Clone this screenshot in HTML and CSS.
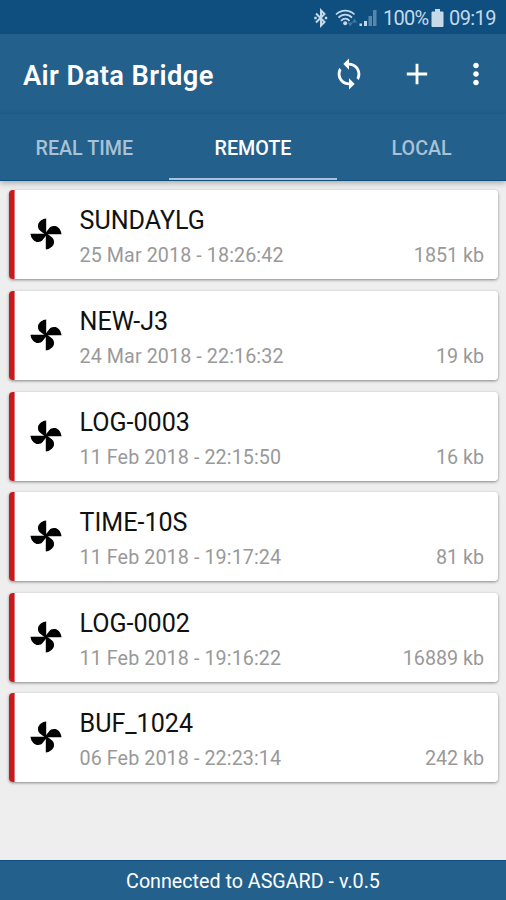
FILE: index.html
```html
<!DOCTYPE html>
<html lang="en">
<head>
<meta charset="utf-8">
<title>Air Data Bridge</title>
<link rel="stylesheet" href="styles.css">
</head>
<body>
<svg width="0" height="0" class="defs">
  <symbol id="fan" viewBox="-16 -16 32 32">
    <g id="blades">
      <path id="blade" d="M.2-15.500V1L-1 .6L-5.800-3.200C-7.800-4.500-8.300-7-7.900-9.500C-6.800-12.800-3.500-15.200.2-15.500Z"/>
      <use href="#blade" transform="rotate(90)"/>
      <use href="#blade" transform="rotate(180)"/>
      <use href="#blade" transform="rotate(270)"/>
    </g>
  </symbol>
</svg>
<div class="app">
  <div class="status">
    <svg class="bt" width="14" height="20" viewBox="0 0 14 20"><path d="M2 5.500l8.500 8.500L7 17.500v-15l3.500 3.500L2 14.500" fill="none" stroke="currentColor" stroke-width="2"/><path d="M.3 8.800h2.400v2.400H.3zM10.800 8.800h2.400v2.400h-2.400z" fill="currentColor"/></svg>
    <svg class="wifi" width="23" height="18" viewBox="0 0 23 18"><g fill="none" stroke="currentColor" stroke-width="1.700"><path d="M1 5.500C6.500.2 14 .2 19.500 5.500M3.500 8.700C7.500 4.600 13 4.600 17 8.700M6 11.800C8.700 9 11.800 9 14.500 11.800"/></g><circle cx="10.200" cy="14.200" r="2" fill="currentColor"/><g fill="#4179a5"><path d="M12.800 13.500h5l-2.500 4zM17 13.500l2.500-4 2.500 4z"/></g></svg>
    <svg class="signal" width="18" height="18" viewBox="0 0 18 18"><g fill="currentColor"><path d="M.5 14.500h2.500V17H.5zM5 12h3v5H5z"/><g opacity=".4"><path d="M9.500 7h3.500v10h-3.500zM14 1h3.500v16h-3.500z"/></g></g></svg>
    <span class="percent">100%</span>
    <svg class="battery" width="13" height="18" viewBox="0 0 13 18"><path d="M4 0h5v2.500h2.500q1 0 1 1V17q0 1-1 1h-10q-1 0-1-1V3.500q0-1 1-1H4z" fill="currentColor"/></svg>
    <span class="clock">09:19</span>
  </div>
  <header class="bar">
    <h1>Air Data Bridge</h1>
    <svg class="sync" width="34" height="34" viewBox="0 0 24 24"><path fill="#fff" d="M12 4V1L8 5l4 4V6c3.310 0 6 2.690 6 6 0 1.010-.25 1.970-.7 2.800l1.460 1.460C19.540 15.030 20 13.570 20 12c0-4.420-3.580-8-8-8zm0 14c-3.310 0-6-2.690-6-6 0-1.010.25-1.970.7-2.800L5.240 7.740C4.460 8.970 4 10.430 4 12c0 4.420 3.580 8 8 8v3l4-4-4-4v3z"/></svg>
    <svg class="plus" width="34" height="34" viewBox="0 0 24 24"><path fill="#fff" d="M19.200 13h-6.200v6.200h-2v-6.200H4.800v-2h6.200V4.800h2v6.200h6.200z"/></svg>
    <svg class="more" width="34" height="34" viewBox="0 0 24 24"><path fill="#fff" d="M12 8c1.100 0 2-.9 2-2s-.9-2-2-2-2 .9-2 2 .9 2 2 2zm0 2c-1.100 0-2 .9-2 2s.9 2 2 2 2-.9 2-2-.9-2-2-2zm0 6c-1.100 0-2 .9-2 2s.9 2 2 2 2-.9 2-2-.9-2-2-2z"/></svg>
  </header>
  <nav class="tabs">
    <div class="tab"><span>REAL TIME</span></div>
    <div class="tab active"><span>REMOTE</span></div>
    <div class="tab"><span>LOCAL</span></div>
  </nav>
  <main class="list">
    <article class="card"><svg class="fan"><use href="#fan"/></svg><div class="info"><h2>SUNDAYLG</h2><div class="meta"><span class="date">25 Mar 2018 - 18:26:42</span><span>1851 kb</span></div></div></article>
    <article class="card"><svg class="fan"><use href="#fan"/></svg><div class="info"><h2>NEW-J3</h2><div class="meta"><span class="date">24 Mar 2018 - 22:16:32</span><span>19 kb</span></div></div></article>
    <article class="card"><svg class="fan"><use href="#fan"/></svg><div class="info"><h2>LOG-0003</h2><div class="meta"><span class="date">11 Feb 2018 - 22:15:50</span><span>16 kb</span></div></div></article>
    <article class="card"><svg class="fan"><use href="#fan"/></svg><div class="info"><h2>TIME-10S</h2><div class="meta"><span class="date">11 Feb 2018 - 19:17:24</span><span>81 kb</span></div></div></article>
    <article class="card"><svg class="fan"><use href="#fan"/></svg><div class="info"><h2>LOG-0002</h2><div class="meta"><span class="date">11 Feb 2018 - 19:16:22</span><span>16889 kb</span></div></div></article>
    <article class="card"><svg class="fan"><use href="#fan"/></svg><div class="info"><h2>BUF_1024</h2><div class="meta"><span class="date">06 Feb 2018 - 22:23:14</span><span>242 kb</span></div></div></article>
  </main>
  <footer class="foot"><span>Connected to ASGARD - v.0.5</span></footer>
</div>
</body>
</html>
```
FILE: styles.css
```css
* { box-sizing: border-box; }
body { margin: 0; font-family: Roboto, sans-serif; background: #eee; }
h1, h2 { margin: 0; }
svg { display: block; flex: none; }
.defs { position: absolute; }
.app { width: 506px; height: 900px; display: flex; flex-direction: column; overflow: hidden; }

.status {
  height: 34px; flex: none; background: #0e4f80; color: #c6d9e8;
  display: flex; align-items: center; justify-content: flex-end;
  padding: 2px 11px 0 0; font-size: 20px;
}
.wifi { margin-left: 7px; }
.signal { margin-left: 1px; }
.percent { margin-left: 6px; width: 47px; letter-spacing: -.7px; white-space: nowrap; }
.battery { margin-left: 1px; }
.clock { margin-left: 5px; width: 46px; letter-spacing: -.6px; white-space: nowrap; }

.bar {
  height: 80px; flex: none; background: #23608c; color: #fff;
  display: flex; align-items: center; padding: 0 13px 1px 23px;
}
.bar h1 { font-size: 27.300px; font-weight: 600; letter-spacing: .4px; flex: 1; line-height: 32px; padding-top: 5px; white-space: nowrap; }
.plus { margin-left: 34px; }
.more { margin-left: 25px; }

.tabs {
  height: 67px; flex: none; background: #23608c; display: flex;
  border-bottom: 1px solid #0d4f81; box-shadow: 0 2px 6px rgba(0,0,0,.3); position: relative;
}
.tab {
  flex: 1; text-align: center; font-size: 19.700px; font-weight: 500; line-height: 24px;
  padding-top: 23px; color: #a9c2d5;
}
.tab.active { color: #fff; box-shadow: inset 0 -2px #a9c2d5; }

.list { flex: 1; padding: 9.400px 8px 0 9px; display: flex; flex-direction: column; gap: 11.600px; }
.card {
  height: 89px; display: flex; align-items: center;
  background: linear-gradient(90deg, #c51a1e 5.300px, #fff 5.800px); border-radius: 4px;
  box-shadow: 0 1px 3px rgba(0,0,0,.45); padding: 0 14px 0 20.500px;
}
.fan { width: 32px; height: 32px; margin-bottom: 1px; }
.info { flex: 1; margin-left: 18px; padding-top: 3px; }
.info h2 { font-size: 25.100px; font-weight: 400; line-height: 34px; color: #111; }
.meta { display: flex; justify-content: space-between; font-size: 19.700px; line-height: 24px; margin-top: 6px; color: #999; }
.date { letter-spacing: .1px; }

.foot {
  height: 40px; flex: none; background: #23608c; border-top: 1px solid #0d4f81; color: #fff;
  display: flex; align-items: center; justify-content: center; font-size: 19.700px; padding-top: 1px;
}
```
